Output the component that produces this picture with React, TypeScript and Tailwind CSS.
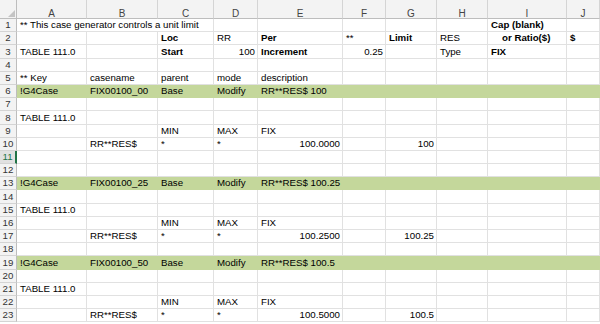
import React from "react";

type Cell = { t: string; b?: boolean; r?: boolean; pl?: boolean };
type Row = { cells: Record<number, Cell>; green?: boolean };

const COLS = ["A", "B", "C", "D", "E", "F", "G", "H", "I", "J"];

const caseRow = (name: string, desc: string): Row => ({
  green: true,
  cells: {
    0: { t: "!G4Case" },
    1: { t: name },
    2: { t: "Base" },
    3: { t: "Modify" },
    4: { t: desc },
  },
});

const tableRows = (fix: string, limit: string): Row[] => [
  { cells: { 0: { t: "TABLE 111.0" } } },
  { cells: { 2: { t: "MIN" }, 3: { t: "MAX" }, 4: { t: "FIX" } } },
  {
    cells: {
      1: { t: "RR**RES$" },
      2: { t: "*" },
      3: { t: "*" },
      4: { t: fix, r: true },
      6: { t: limit, r: true },
    },
  },
];

const ROWS: Row[] = [
  // row 1 is drawn separately (text overflows A..C)
  { cells: { 8: { t: "Cap (blank)", b: true } } },
  {
    cells: {
      2: { t: "Loc", b: true },
      3: { t: "RR" },
      4: { t: "Per", b: true },
      5: { t: "**" },
      6: { t: "Limit", b: true },
      7: { t: "RES" },
      8: { t: "or Ratio($)", b: true, pl: true },
      9: { t: "$", b: true },
    },
  },
  {
    cells: {
      0: { t: "TABLE 111.0" },
      2: { t: "Start", b: true },
      3: { t: "100", r: true },
      4: { t: "Increment", b: true },
      5: { t: "0.25", r: true },
      7: { t: "Type" },
      8: { t: "FIX", b: true },
    },
  },
  { cells: {} },
  {
    cells: {
      0: { t: "** Key" },
      1: { t: "casename" },
      2: { t: "parent" },
      3: { t: "mode" },
      4: { t: "description" },
    },
  },
  caseRow("FIX00100_00", "RR**RES$ 100"),
  { cells: {} },
  ...tableRows("100.0000", "100"),
  { cells: {} },
  { cells: {} },
  caseRow("FIX00100_25", "RR**RES$ 100.25"),
  { cells: {} },
  ...tableRows("100.2500", "100.25"),
  { cells: {} },
  caseRow("FIX00100_50", "RR**RES$ 100.5"),
  { cells: {} },
  ...tableRows("100.5000", "100.5"),
];

const SELECTED_ROW = 11;

function RowHead({ n }: { n: number }) {
  const sel = n === SELECTED_ROW;
  return (
    <div
      className={
        sel
          ? "flex items-end justify-center pb-[1px] bg-[#e1e1e1] text-[#217346] border-b border-b-[#d4d4d4] border-r-2 border-r-[#217346]"
          : "flex items-end justify-center pb-[1px] bg-[#f3f3f3] text-[#333] border-b border-b-[#d4d4d4] border-r border-r-[#bdbdbd]"
      }
    >
      {n}
    </div>
  );
}

function GridCell({ cell, green }: { cell?: Cell; green?: boolean }) {
  return (
    <div
      className={[
        "flex items-end min-w-0 overflow-hidden whitespace-nowrap border-r border-b pb-[1px]",
        green ? "bg-[#c4d79b] border-[#c4d79b]" : "border-[#e1e1e1]",
        cell?.r ? "justify-end pr-[2px]" : cell?.pl ? "pl-[14px]" : "pl-[3px]",
        cell?.b ? "font-bold" : "",
      ].join(" ")}
    >
      {cell?.t}
    </div>
  );
}

export default function App() {
  return (
    <div className="w-[600px] h-[324px] overflow-hidden bg-white text-black font-['Liberation_Sans',Arial,sans-serif] text-[9.7px] leading-[11px]">
      <div className="grid grid-cols-[17px_70px_71px_56px_44px_85px_43px_51px_51px_79px_1fr] grid-rows-[19px_repeat(23,13.2px)]">
        {/* corner */}
        <div className="relative bg-[#f3f3f3] border-r border-b border-[#bdbdbd]">
          <svg className="absolute right-[1px] bottom-[1px]" width="7" height="7" viewBox="0 0 7 7">
            <polygon points="7,0 7,7 0,7" fill="#c4c4c4" />
          </svg>
        </div>
        {COLS.map((c) => (
          <div
            key={c}
            className="flex items-start justify-center pt-[8px] bg-[#f3f3f3] text-[#444] text-[10px] border-r border-r-[#d4d4d4] border-b border-b-[#bdbdbd]"
          >
            {c}
          </div>
        ))}

        {/* row 1 */}
        <RowHead n={1} />
        <div className="col-span-3 flex items-end whitespace-nowrap pl-[3px] pb-[1px] border-r border-b border-[#e1e1e1]">
          ** This case generator controls a unit limit
        </div>
        {COLS.slice(3).map((c, i) => (
          <GridCell key={c} cell={ROWS[0].cells[i + 3]} />
        ))}

        {ROWS.slice(1).map((row, ri) => (
          <React.Fragment key={ri}>
            <RowHead n={ri + 2} />
            {COLS.map((c, ci) => (
              <GridCell key={c} cell={row.cells[ci]} green={row.green} />
            ))}
          </React.Fragment>
        ))}
      </div>
    </div>
  );
}
